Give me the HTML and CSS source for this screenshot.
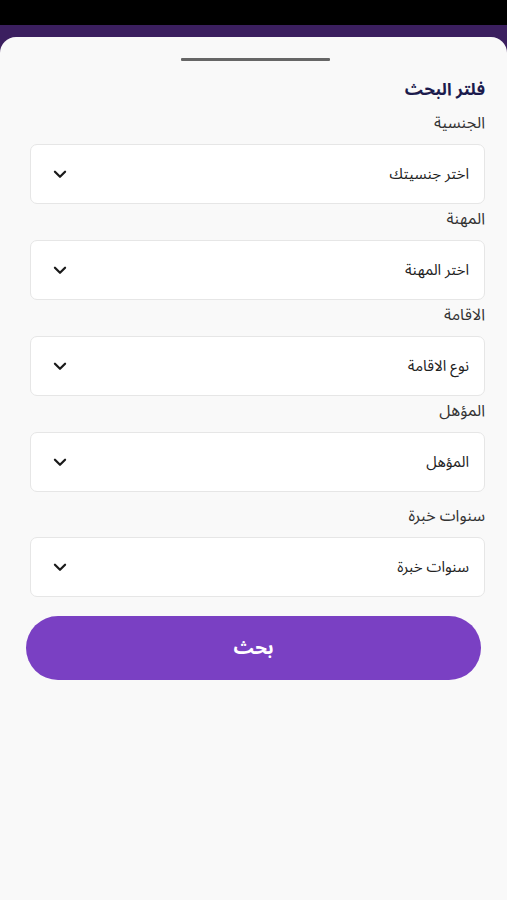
FILE: index.html
```html
<!DOCTYPE html>
<html lang="ar" dir="rtl">
<head>
  <meta charset="UTF-8">
  <title>فلتر البحث</title>
  <link rel="stylesheet" href="styles.css">
</head>
<body>
  <div class="status-bar"></div>
  <div class="backdrop">
    <div class="sheet">
      <div class="handle"></div>
      <h3 class="title">فلتر البحث</h3>

      <div class="field">
        <label class="label">الجنسية</label>
        <div class="select">
          <span class="value">اختر جنسيتك</span>
          <svg class="chevron" viewBox="0 0 12 8"><path d="M1.5 1.5 L6 6 L10.5 1.5" /></svg>
        </div>
      </div>

      <div class="field">
        <label class="label">المهنة</label>
        <div class="select">
          <span class="value">اختر المهنة</span>
          <svg class="chevron" viewBox="0 0 12 8"><path d="M1.5 1.5 L6 6 L10.5 1.5" /></svg>
        </div>
      </div>

      <div class="field">
        <label class="label">الاقامة</label>
        <div class="select">
          <span class="value">نوع الاقامة</span>
          <svg class="chevron" viewBox="0 0 12 8"><path d="M1.5 1.5 L6 6 L10.5 1.5" /></svg>
        </div>
      </div>

      <div class="field">
        <label class="label">المؤهل</label>
        <div class="select">
          <span class="value">المؤهل</span>
          <svg class="chevron" viewBox="0 0 12 8"><path d="M1.5 1.5 L6 6 L10.5 1.5" /></svg>
        </div>
      </div>

      <div class="field field-wide">
        <label class="label">سنوات خبرة</label>
        <div class="select">
          <span class="value">سنوات خبرة</span>
          <svg class="chevron" viewBox="0 0 12 8"><path d="M1.5 1.5 L6 6 L10.5 1.5" /></svg>
        </div>
      </div>

      <button class="search-btn">بحث</button>
    </div>
  </div>
</body>
</html>
```

FILE: styles.css
```css
html, body {
  margin: 0;
  padding: 0;
  width: 507px;
  height: 900px;
  overflow: hidden;
  background-color: #000;
  font-family: "Noto Sans Arabic", "DejaVu Sans", sans-serif;
}
.status-bar {
  height: 25px;
  background-color: #000;
}
.backdrop {
  height: 875px;
  background-color: #3b1f5f;
  padding-top: 12px;
  box-sizing: border-box;
}
.sheet {
  height: 863px;
  background-color: #f9f9f9;
  border-radius: 16px 16px 0 0;
  padding: 0 22px 0 26px;
  box-sizing: border-box;
  display: flex;
  flex-direction: column;
}
.handle {
  width: 149px;
  height: 3px;
  background-color: #666;
  margin: 21px auto 0;
  align-self: center;
  border-radius: 1px;
}
.title {
  margin: 15px 0 0;
  font-size: 17px;
  font-weight: bold;
  color: #1c1b4d;
  line-height: 28px;
}
.field {
  display: flex;
  flex-direction: column;
}
.label {
  font-size: 16px;
  color: #333;
  line-height: 24px;
  margin-top: 7px;
  margin-bottom: 9px;
}
.field + .field .label {
  margin-top: 3px;
}
.field-wide .label {
  margin-top: 12px !important;
}
.select {
  height: 60px;
  margin-left: 4px;
  background-color: #fff;
  border: 1px solid #e6e6e6;
  border-radius: 7px;
  box-sizing: border-box;
  display: flex;
  align-items: center;
  justify-content: space-between;
  padding: 0 15px 0 22px;
}
.value {
  font-size: 15px;
  color: #222;
}
.chevron {
  width: 14px;
  height: 9px;
  fill: none;
  stroke: #1a1a1a;
  stroke-width: 2;
  stroke-linecap: round;
  stroke-linejoin: round;
}
.search-btn {
  margin-top: 19px;
  margin-right: 4px;
  height: 64px;
  border: none;
  border-radius: 32px;
  background-color: #7a40c3;
  color: #fff;
  font-family: inherit;
  font-size: 19px;
  font-weight: bold;
}
```
